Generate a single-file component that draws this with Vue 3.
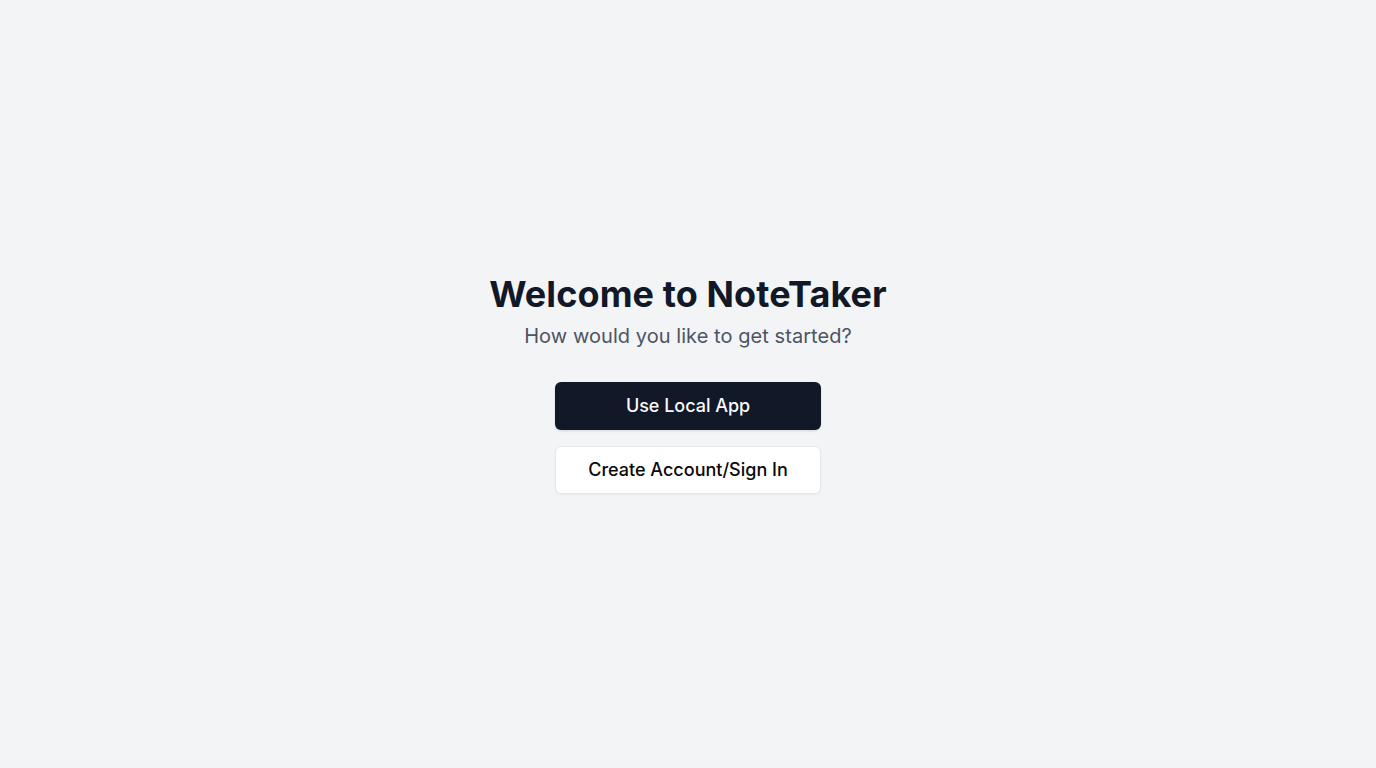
<script setup>
const choices = [
  { label: 'Use Local App', variant: 'primary' },
  { label: 'Create Account/Sign In', variant: 'outline' },
]
</script>

<template>
  <main class="page">
    <header class="intro">
      <h1 class="title">Welcome to NoteTaker</h1>
      <p class="subtitle">How would you like to get started?</p>
    </header>
    <div class="actions">
      <button
        v-for="choice in choices"
        :key="choice.label"
        type="button"
        class="button"
        :class="choice.variant"
      >
        {{ choice.label }}
      </button>
    </div>
  </main>
</template>

<style>
body {
  margin: 0;
}
</style>

<style scoped>
.page {
  min-height: 100vh;
  display: flex;
  flex-direction: column;
  align-items: center;
  justify-content: center;
  background: #f3f4f6;
  font-family: Inter, sans-serif;
}

.intro {
  margin-bottom: 32px;
  text-align: center;
}

.title {
  margin: 0 0 8px;
  font-size: 36px;
  line-height: 40px;
  font-weight: 700;
  letter-spacing: 0.1px;
  color: #111827;
}

.subtitle {
  margin: 0;
  font-size: 20px;
  line-height: 28px;
  font-weight: 400;
  letter-spacing: 0.06px;
  color: #4b5563;
}

.actions {
  display: flex;
  flex-direction: column;
  gap: 16px;
}

.button {
  box-sizing: border-box;
  height: 48px;
  padding: 0 32px;
  border: 0;
  border-radius: 6px;
  font-family: inherit;
  font-size: 18px;
  line-height: 28px;
  font-weight: 500;
  white-space: nowrap;
}

.primary {
  background: #111827;
  color: #f9fafb;
  letter-spacing: -0.03px;
  box-shadow: 0 1px 3px rgba(0, 0, 0, 0.1), 0 1px 2px -1px rgba(0, 0, 0, 0.1);
}

.outline {
  background: #fff;
  border: 1px solid #e5e7eb;
  color: #0a0a0a;
  box-shadow: 0 1px 2px rgba(0, 0, 0, 0.05);
}
</style>
